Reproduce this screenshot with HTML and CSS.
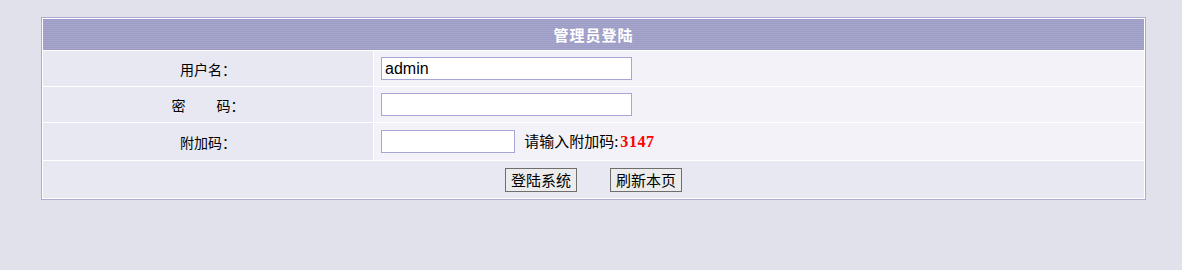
FILE: index.html
```html
<!DOCTYPE html>
<html lang="zh-CN">
<head>
  <meta charset="UTF-8">
  <title>管理员登陆</title>
  <link rel="stylesheet" href="styles.css">
</head>
<body>
  <form class="login-form" onsubmit="return false;">
    <table class="login">
      <colgroup>
        <col class="col-label">
        <col class="col-field">
      </colgroup>
      <tr>
        <th colspan="2" class="title">管理员登陆</th>
      </tr>
      <tr class="row">
        <td class="label">用户名：</td>
        <td class="field"><input type="text" class="txt" name="username" value="admin"></td>
      </tr>
      <tr class="row">
        <td class="label">密<span class="gap">　　</span>码：</td>
        <td class="field"><input type="password" class="txt" name="password"></td>
      </tr>
      <tr class="row tall">
        <td class="label">附加码：</td>
        <td class="field">
          <input type="text" class="txt short" name="code">
          <span class="prompt">请输入附加码:<b class="code">3147</b></span>
        </td>
      </tr>
      <tr class="row tall">
        <td colspan="2" class="actions">
          <button type="submit" class="btn">登陆系统</button>
          <button type="button" class="btn" onclick="location.reload()">刷新本页</button>
        </td>
      </tr>
    </table>
  </form>
</body>
</html>
```

FILE: styles.css
```css
body {
  margin: 0;
  padding: 17px 0 0 41px;
  background: #e1e1ec;
  font-family: "Noto Sans CJK SC", "Liberation Sans", sans-serif;
  font-size: 14px;
  color: #000;
}
.login-form {
  margin: 0;
}
.login {
  width: 1105px;
  border: 1px solid #acacd2;
  border-spacing: 1px;
  background: #fff;
  table-layout: fixed;
}
.col-label {
  width: 330px;
}
.login td,
.login th {
  padding: 0;
}
.title {
  height: 31px;
  background: repeating-linear-gradient(to bottom, #9c9cc4 0, #9c9cc4 1px, #a6a6cd 1px, #a6a6cd 2px);
  color: #fff;
  font-size: 15px;
  font-weight: bold;
  letter-spacing: 1px;
  text-align: center;
}
.row td {
  height: 35px;
}
.row.tall td {
  height: 37px;
}
.label {
  background: #e8e8f2;
  text-align: center;
  font-family: "Noto Sans CJK JP", sans-serif;
  line-height: 1;
}
.gap {
  letter-spacing: 1.5px;
}
.login .field {
  background: #f2f2f8;
  padding-left: 7px;
  line-height: 1;
}
.txt {
  box-sizing: border-box;
  width: 251px;
  height: 23px;
  margin: 0;
  padding: 0 3px;
  border: 1px solid #a6a6d6;
  background: #fff;
  font-family: "Liberation Sans", sans-serif;
  font-size: 16px;
  color: #000;
  vertical-align: middle;
  outline: none;
}
.txt.short {
  width: 134px;
}
.prompt {
  margin-left: 6px;
  font-size: 15px;
  vertical-align: middle;
}
.code {
  margin-left: 2px;
  color: #ff0000;
  font-family: "Liberation Serif", serif;
  font-size: 16px;
  font-weight: bold;
  letter-spacing: 0.6px;
}
.actions {
  background: #e8e8f2;
  text-align: center;
}
.btn {
  box-sizing: border-box;
  width: 72px;
  height: 24px;
  margin: 0 15px;
  padding: 0;
  border: 1px solid #6e6e6e;
  background: #ececec;
  font-family: "Noto Sans CJK SC", sans-serif;
  font-size: 15px;
  line-height: 22px;
  color: #000;
  vertical-align: middle;
  cursor: pointer;
}
```
